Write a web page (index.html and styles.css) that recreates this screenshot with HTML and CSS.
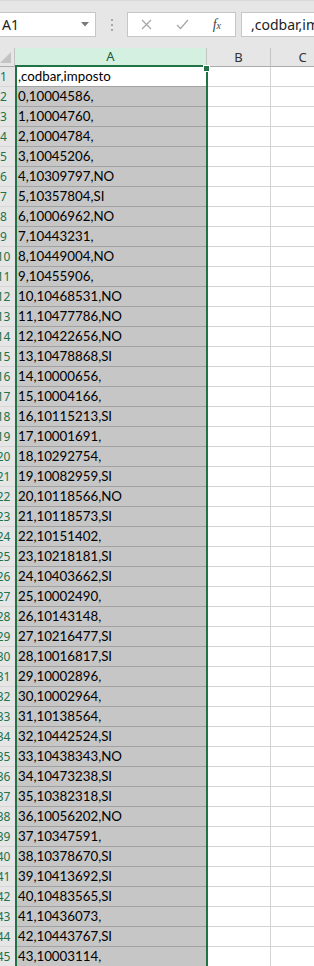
FILE: index.html
```html
<!DOCTYPE html>
<html lang="it">
<head>
    <meta charset="UTF-8">
    <meta name="viewport" content="width=device-width, initial-scale=1.0">
    <title>Foglio1</title>
    <link rel="stylesheet" href="styles.css">
</head>
<body>
    <div class="toolbar">
        <div class="name-box">
            <span>A1</span>
            <svg class="drop" width="8" height="5" viewBox="0 0 8 5"><path d="M0 0h8L4 4.5z" fill="#7a7a7a"/></svg>
        </div>
        <div class="grip"><i></i><i></i><i></i></div>
        <div class="fx-buttons">
            <svg width="11" height="11" viewBox="0 0 11 11"><path d="M1 1l9 9M10 1l-9 9" stroke="#a6a6a6" stroke-width="1.2" fill="none"/></svg>
            <svg width="13" height="11" viewBox="0 0 13 11"><path d="M1 6l3.5 3.5L12 1" stroke="#a6a6a6" stroke-width="1.2" fill="none"/></svg>
            <span class="fx">f<small>x</small></span>
        </div>
        <div class="formula-input">,codbar,imposto</div>
    </div>

    <div class="sheet">
        <div class="grid" id="grid">
            <div class="corner"><span class="select-all"></span></div>
            <div class="col-head active">A</div>
            <div class="col-head">B</div>
            <div class="col-head">C</div>
        </div>
        <div class="selection"><span class="fill-handle"></span></div>
    </div>

    <script>
        const rows = [
            ',codbar,imposto', '0,10004586,', '1,10004760,', '2,10004784,', '3,10045206,',
            '4,10309797,NO', '5,10357804,SI', '6,10006962,NO', '7,10443231,', '8,10449004,NO',
            '9,10455906,', '10,10468531,NO', '11,10477786,NO', '12,10422656,NO', '13,10478868,SI',
            '14,10000656,', '15,10004166,', '16,10115213,SI', '17,10001691,', '18,10292754,',
            '19,10082959,SI', '20,10118566,NO', '21,10118573,SI', '22,10151402,', '23,10218181,SI',
            '24,10403662,SI', '25,10002490,', '26,10143148,', '27,10216477,SI', '28,10016817,SI',
            '29,10002896,', '30,10002964,', '31,10138564,', '32,10442524,SI', '33,10438343,NO',
            '34,10473238,SI', '35,10382318,SI', '36,10056202,NO', '37,10347591,', '38,10378670,SI',
            '39,10413692,SI', '40,10483565,SI', '41,10436073,', '42,10443767,SI', '43,10003114,'
        ];

        const grid = document.getElementById('grid');
        rows.forEach((text, i) => {
            const head = document.createElement('div');
            head.className = 'row-head';
            head.textContent = i + 1;
            grid.appendChild(head);

            const cellA = document.createElement('div');
            cellA.className = i === 0 ? 'cell cell-a current' : 'cell cell-a';
            cellA.textContent = text;
            grid.appendChild(cellA);

            for (let c = 0; c < 2; c++) {
                const empty = document.createElement('div');
                empty.className = 'cell';
                grid.appendChild(empty);
            }
        });
    </script>
</body>
</html>
```

FILE: styles.css
```css
body {
    margin: 0;
    background: #fff;
    overflow: hidden;
    font-family: "Noto Sans", "Open Sans", sans-serif;
}
.toolbar {
    height: 48px;
    box-sizing: border-box;
    background: #e6e6e6;
    border-top: 1px solid #d9d9d9;
    padding-top: 11px;
    display: flex;
    align-items: flex-start;
    overflow: hidden;
    white-space: nowrap;
}
.name-box {
    width: 96px;
    height: 25px;
    box-sizing: border-box;
    flex: none;
    background: #fff;
    border: 1px solid #c6c6c6;
    border-left: none;
    display: flex;
    align-items: center;
    justify-content: space-between;
    padding: 0 6px 0 2px;
    font-size: 14px;
    color: #222;
}
.grip {
    width: 31px;
    height: 25px;
    flex: none;
    display: flex;
    flex-direction: column;
    align-items: center;
    justify-content: center;
    gap: 3px;
}
.grip i {
    width: 2px;
    height: 2px;
    background: #a8a8a8;
}
.fx-buttons {
    width: 109px;
    height: 25px;
    box-sizing: border-box;
    flex: none;
    background: #fff;
    border: 1px solid #c6c6c6;
    display: flex;
    align-items: center;
    padding: 0 14px 0 13px;
    justify-content: space-between;
}
.fx {
    font-family: "Liberation Serif", serif;
    font-style: italic;
    font-size: 14px;
    color: #444;
}
.fx small {
    font-size: 10px;
}
.formula-input {
    flex: none;
    width: 120px;
    height: 25px;
    box-sizing: border-box;
    margin-left: 5px;
    background: #fff;
    border: 1px solid #c6c6c6;
    padding: 2px 0 0 9px;
    font-size: 14px;
    color: #222;
}
.sheet {
    position: relative;
    overflow: hidden;
}
.grid {
    display: grid;
    grid-template-columns: 25px 192px 64px 64px;
    grid-template-rows: 19px;
    grid-auto-rows: 20px;
    margin-left: -10px;
}
.corner, .col-head {
    background: #e6e6e6;
    border-right: 1px solid #c4c4c4;
    border-bottom: 1px solid #ababab;
    box-sizing: border-box;
}
.corner {
    position: relative;
}
.select-all {
    position: absolute;
    right: 3px;
    bottom: 3px;
    width: 0;
    height: 0;
    border-left: 11px solid transparent;
    border-bottom: 11px solid #c3c3c3;
}
.col-head {
    font-size: 13px;
    color: #333;
    text-align: center;
    line-height: 18px;
}
.col-head.active {
    background: #d3f0e0;
    color: #1d5c39;
    border-bottom: 2px solid #217346;
    line-height: 17px;
}
.row-head {
    background: #e6e6e6;
    border-bottom: 1px solid #d6d6d6;
    box-sizing: border-box;
    padding-left: 2px;
    color: #217346;
    font-size: 12px;
    line-height: 20px;
    text-align: center;
}
.cell {
    border-right: 1px solid #d4d4d4;
    border-bottom: 1px solid #d4d4d4;
    box-sizing: border-box;
    font-family: Lato, "Liberation Sans", sans-serif;
    font-size: 13.3px;
    line-height: 19px;
    color: #000;
    white-space: nowrap;
}
.cell-a {
    background: #c6c6c6;
    border-bottom-color: #a2a2a2;
    padding-left: 3px;
}
.cell-a.current {
    background: #fff;
}
.selection {
    position: absolute;
    left: 15px;
    top: 17px;
    width: 193px;
    bottom: -4px;
    border: 2px solid #217346;
    box-sizing: border-box;
}
.fill-handle {
    position: absolute;
    left: 186px;
    top: -2px;
    width: 5px;
    height: 5px;
    background: #217346;
    border: 1px solid #fff;
}
```
